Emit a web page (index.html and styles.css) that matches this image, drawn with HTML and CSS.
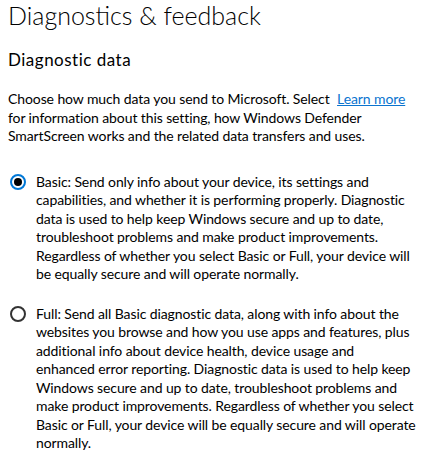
FILE: index.html
```html
<!DOCTYPE html>
<html lang="en">
<head>
  <meta charset="UTF-8" />
  <title>Diagnostics &amp; feedback</title>
  <link rel="stylesheet" href="styles.css">
</head>
<body>
  <div class="page">
    <h1 class="title">Diagnostics &amp; feedback</h1>
    <h2 class="subtitle">Diagnostic data</h2>

    <p class="intro">
      Choose how much data you send to Microsoft. Select <a href="#" class="link">Learn more</a><br>
      for information about this setting, how Windows Defender<br>
      SmartScreen works and the related data transfers and uses.
    </p>

    <label class="option">
      <input type="radio" name="level" checked />
      <span class="radio"></span>
      <span class="option-text">Basic: Send only info about your device, its settings and<br>
        capabilities, and whether it is performing properly. Diagnostic<br>
        data is used to help keep Windows secure and up to date,<br>
        troubleshoot problems and make product improvements.<br>
        Regardless of whether you select Basic or Full, your device will<br>
        be equally secure and will operate normally.</span>
    </label>

    <label class="option">
      <input type="radio" name="level" />
      <span class="radio"></span>
      <span class="option-text">Full: Send all Basic diagnostic data, along with info about the<br>
        websites you browse and how you use apps and features, plus<br>
        additional info about device health, device usage and<br>
        enhanced error reporting. Diagnostic data is used to help keep<br>
        Windows secure and up to date, troubleshoot problems and<br>
        make product improvements. Regardless of whether you select<br>
        Basic or Full, your device will be equally secure and will operate<br>
        normally.</span>
    </label>
  </div>
</body>
</html>
```
FILE: styles.css
```css
* {
  margin: 0;
  padding: 0;
  box-sizing: border-box;
}
body {
  font-family: 'Lato', sans-serif;
  background: #fff;
  color: #000;
}
.page {
  padding: 0 4px 0 8px;
}
.title {
  font-size: 25px;
  font-weight: 300;
  line-height: 30px;
  color: #000;
}
.subtitle {
  margin-top: 20px;
  font-size: 17px;
  font-weight: 400;
  line-height: 20px;
  letter-spacing: 0.5px;
}
.intro,
.option-text {
  font-size: 14px;
  line-height: 18.5px;
  letter-spacing: -0.1px;
  white-space: nowrap;
}
.intro {
  margin-top: 20px;
}
.link {
  color: #0a74cf;
  margin-left: 4px;
}
.option {
  display: flex;
  align-items: flex-start;
  gap: 10px;
  padding-left: 2px;
  margin-top: 21px;
  cursor: pointer;
}
.intro + .option {
  margin-top: 27px;
}
.option input {
  display: none;
}
.radio {
  flex: none;
  width: 16px;
  height: 16px;
  margin-top: 1.5px;
  border: 2px solid #333;
  border-radius: 50%;
  display: flex;
  justify-content: center;
  align-items: center;
}
.option input:checked + .radio {
  border-color: #0078d7;
}
.option input:checked + .radio::after {
  content: "";
  width: 8px;
  height: 8px;
  border-radius: 50%;
  background: #000;
}
```
